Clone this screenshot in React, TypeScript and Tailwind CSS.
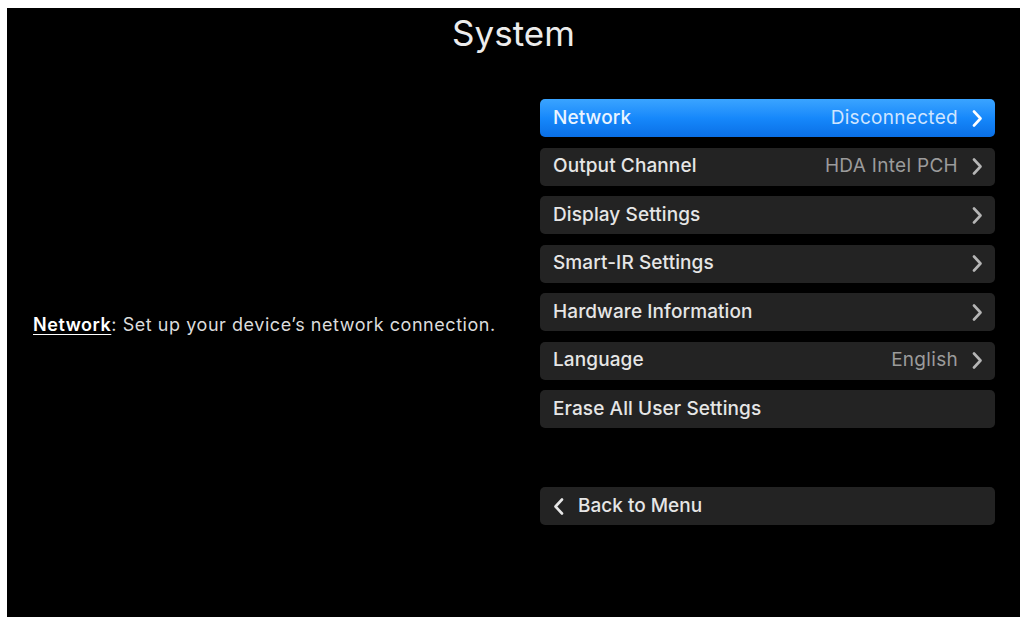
import { useState } from "react";

interface Row {
  label: string;
  value?: string;
  arrow?: boolean;
}

const rows: Row[] = [
  { label: "Network", value: "Disconnected", arrow: true },
  { label: "Output Channel", value: "HDA Intel PCH", arrow: true },
  { label: "Display Settings", arrow: true },
  { label: "Smart-IR Settings", arrow: true },
  { label: "Hardware Information", arrow: true },
  { label: "Language", value: "English", arrow: true },
  { label: "Erase All User Settings" },
];

const Chevron = ({ left = false }: { left?: boolean }) => (
  <svg width="11" height="17" viewBox="0 0 11 17" className="shrink-0">
    <path
      d={left ? "M9 1.5 L2.5 8.5 L9 15.5" : "M2 1.5 L8.5 8.5 L2 15.5"}
      fill="none"
      stroke="currentColor"
      strokeWidth="2.6"
      strokeLinecap="round"
      strokeLinejoin="round"
    />
  </svg>
);

const MenuRow = ({ row, active }: { row: Row; active: boolean }) => (
  <div
    className={`flex h-[38px] items-center rounded-[5px] pl-[13px] pr-[12px] ${
      active
        ? "bg-gradient-to-b from-[#3aa4ff] via-[#1688fb] to-[#0a6fe6] text-[#eaf4ff]"
        : "bg-[#232323] text-[#e6e6e6]"
    }`}
  >
    <span className="flex-1 text-[19px] font-medium tracking-[0.1px]">{row.label}</span>
    {row.value && (
      <span
        className={`mr-[14px] text-[19px] tracking-[0.3px] ${
          active ? "text-[#cfe5ff]" : "text-[#9b9b9b]"
        }`}
      >
        {row.value}
      </span>
    )}
    {row.arrow && (
      <span className={active ? "text-white" : "text-[#b5b5b5]"}>
        <Chevron />
      </span>
    )}
  </div>
);

export default function App() {
  const [selected] = useState(0);

  return (
    <div
      className="h-[620px] w-[1024px] bg-white pb-[3px] pl-[7px] pr-[4px] pt-[8px]"
      style={{ fontFamily: "Inter, 'Noto Sans', sans-serif" }}
    >
      <div className="flex h-full flex-col bg-black">
        <h1 className="pt-[5px] text-center text-[35px] leading-[40px] text-[#ececec]">System</h1>
        <div className="mt-[46px] flex">
          <div className="w-[533px] pl-[26px] pt-[212px]">
            <p className="text-[18px] tracking-[0.55px] text-[#dcdcdc]">
              <span className="font-semibold text-white underline underline-offset-[3px]">
                Network
              </span>
              : Set up your device’s network connection.
            </p>
          </div>
          <div className="flex w-[455px] flex-col">
            <div className="flex flex-col gap-[10.5px]">
              {rows.map((row, i) => (
                <MenuRow key={row.label} row={row} active={i === selected} />
              ))}
            </div>
            <div className="mt-[59px] flex h-[38px] items-center gap-[14px] rounded-[5px] bg-[#232323] pl-[13px] text-[#e6e6e6]">
              <Chevron left />
              <span className="text-[19px] font-medium">Back to Menu</span>
            </div>
          </div>
        </div>
      </div>
    </div>
  );
}
